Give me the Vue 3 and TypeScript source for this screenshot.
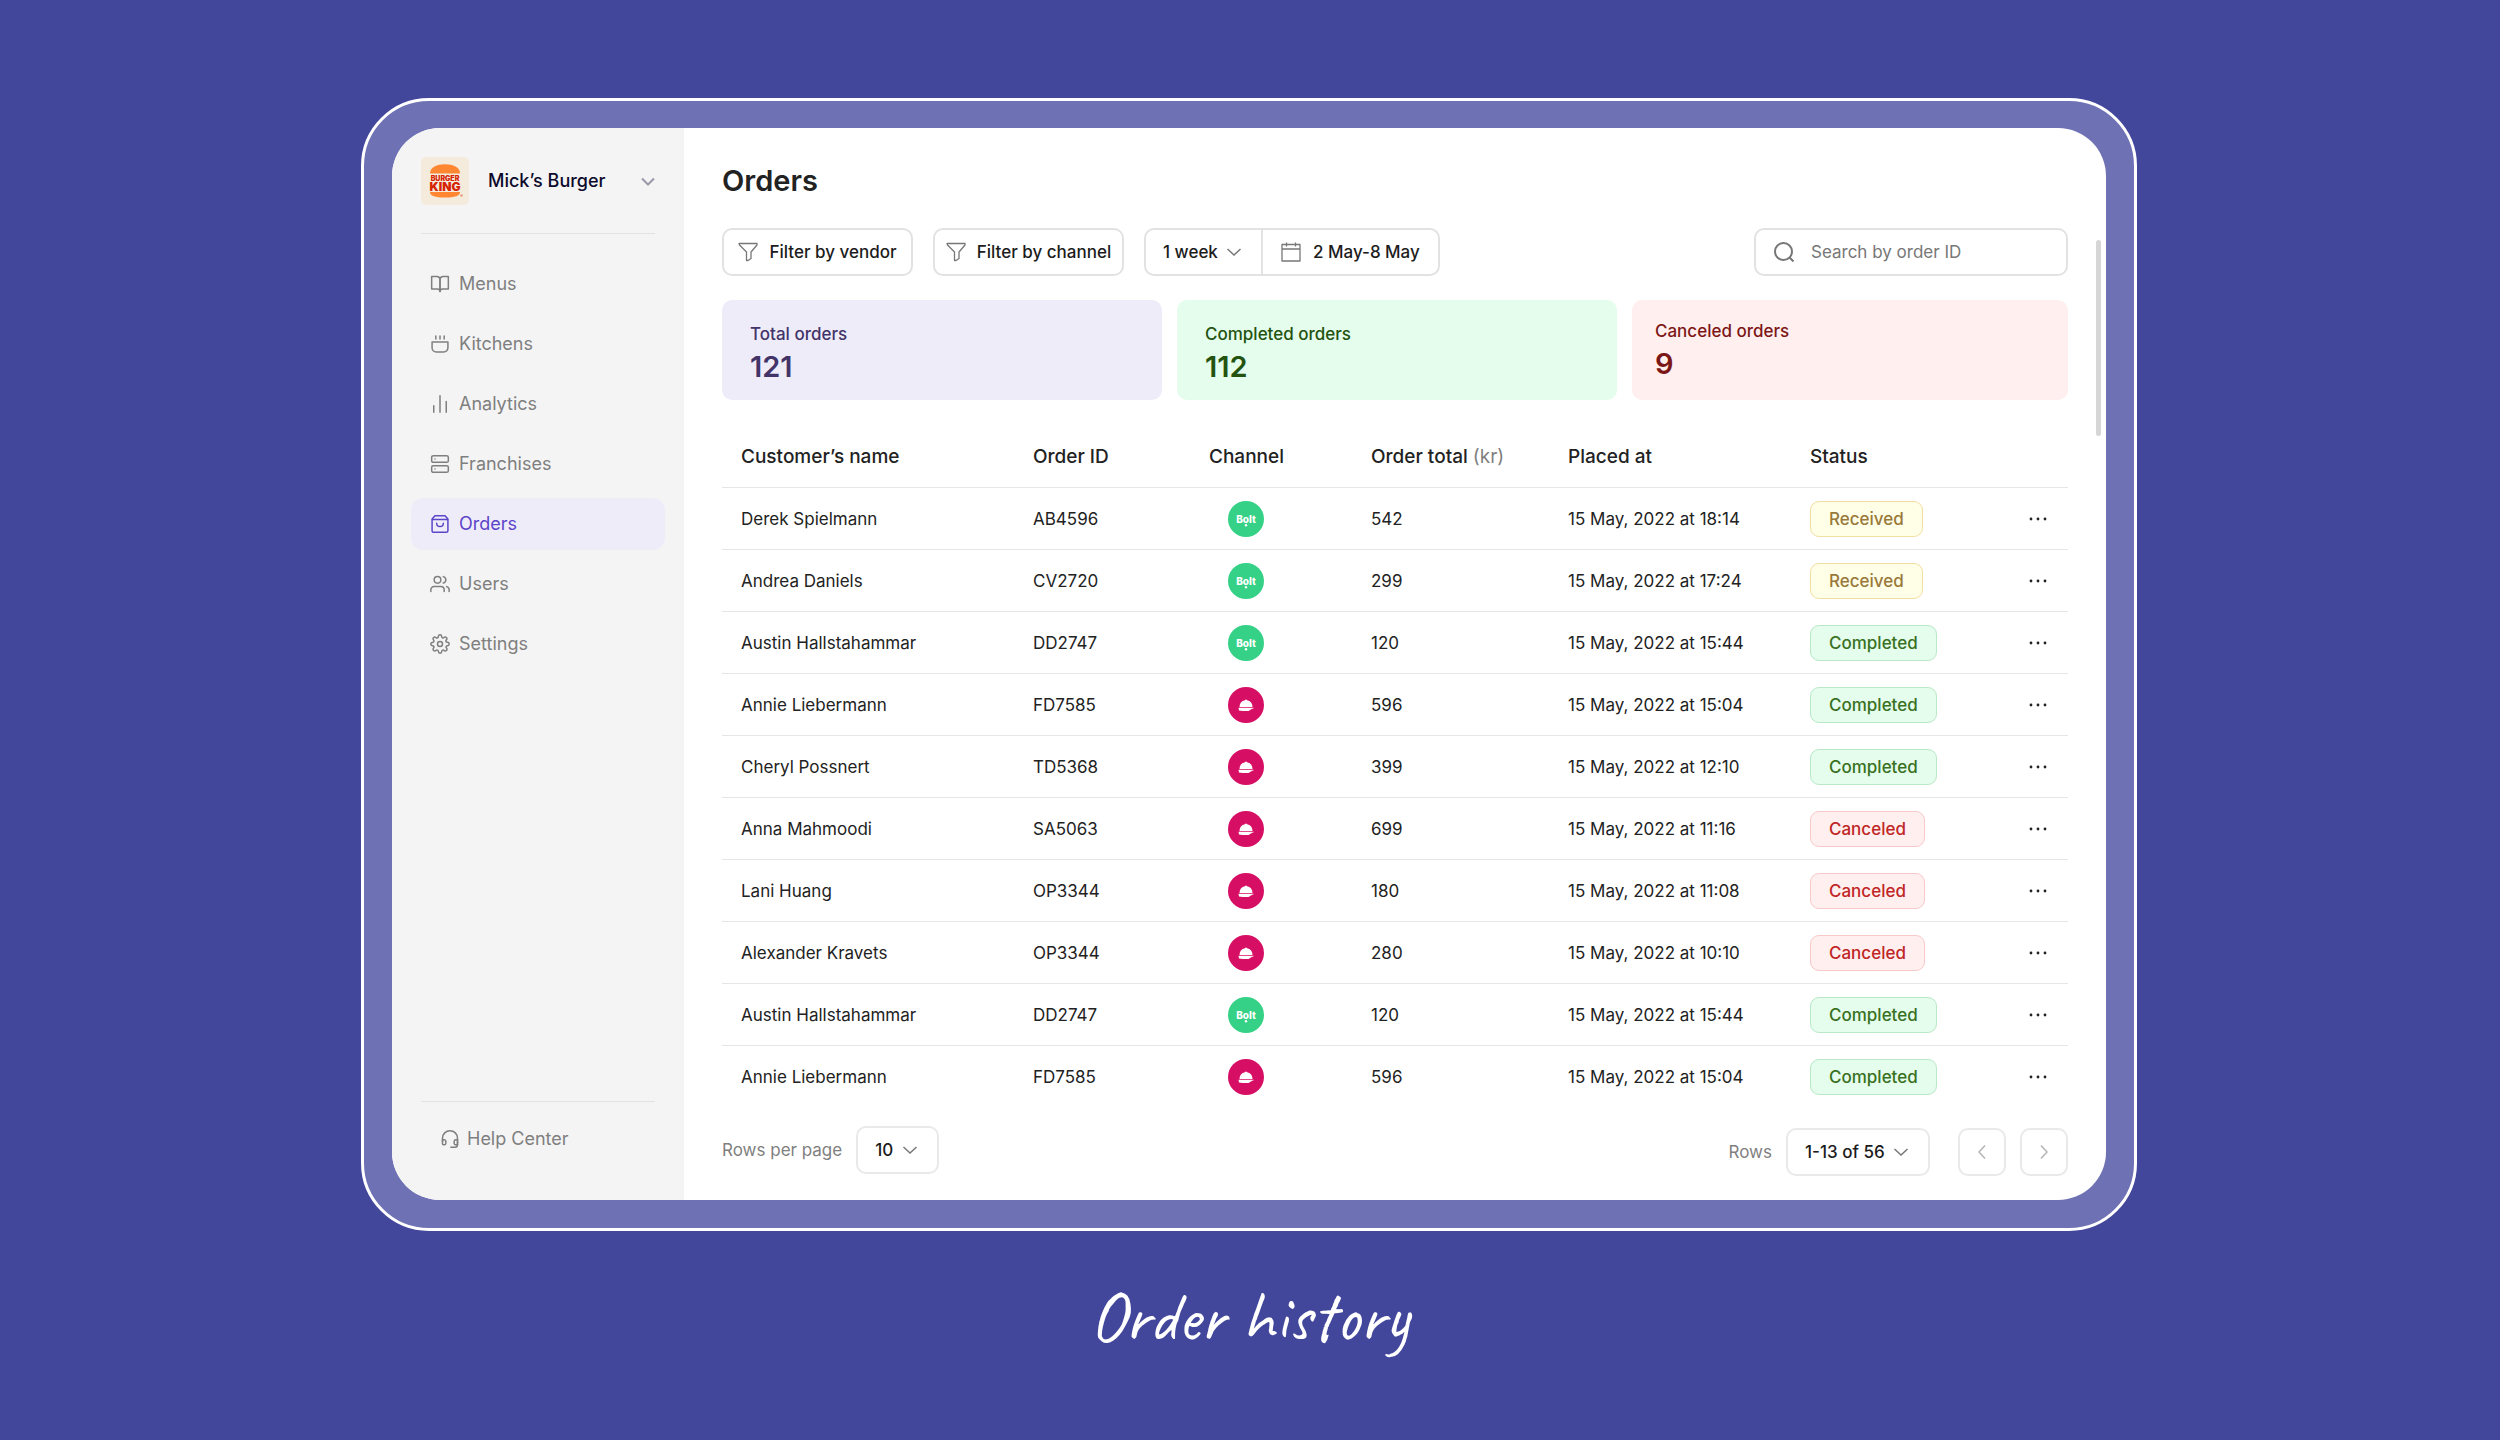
<script setup lang="ts">
type Channel = 'bolt' | 'foodora'
type Status = 'Received' | 'Completed' | 'Canceled'

interface Order {
  name: string
  id: string
  channel: Channel
  total: number
  placed: string
  status: Status
}

const nav = ['Menus', 'Kitchens', 'Analytics', 'Franchises', 'Orders', 'Users', 'Settings']
const active = 'Orders'

const stats = [
  { key: 'total', label: 'Total orders', value: 121 },
  { key: 'completed', label: 'Completed orders', value: 112 },
  { key: 'canceled', label: 'Canceled orders', value: 9 },
]

const orders: Order[] = [
  { name: 'Derek Spielmann', id: 'AB4596', channel: 'bolt', total: 542, placed: '15 May, 2022 at 18:14', status: 'Received' },
  { name: 'Andrea Daniels', id: 'CV2720', channel: 'bolt', total: 299, placed: '15 May, 2022 at 17:24', status: 'Received' },
  { name: 'Austin Hallstahammar', id: 'DD2747', channel: 'bolt', total: 120, placed: '15 May, 2022 at 15:44', status: 'Completed' },
  { name: 'Annie Liebermann', id: 'FD7585', channel: 'foodora', total: 596, placed: '15 May, 2022 at 15:04', status: 'Completed' },
  { name: 'Cheryl Possnert', id: 'TD5368', channel: 'foodora', total: 399, placed: '15 May, 2022 at 12:10', status: 'Completed' },
  { name: 'Anna Mahmoodi', id: 'SA5063', channel: 'foodora', total: 699, placed: '15 May, 2022 at 11:16', status: 'Canceled' },
  { name: 'Lani Huang', id: 'OP3344', channel: 'foodora', total: 180, placed: '15 May, 2022 at 11:08', status: 'Canceled' },
  { name: 'Alexander Kravets', id: 'OP3344', channel: 'foodora', total: 280, placed: '15 May, 2022 at 10:10', status: 'Canceled' },
  { name: 'Austin Hallstahammar', id: 'DD2747', channel: 'bolt', total: 120, placed: '15 May, 2022 at 15:44', status: 'Completed' },
  { name: 'Annie Liebermann', id: 'FD7585', channel: 'foodora', total: 596, placed: '15 May, 2022 at 15:04', status: 'Completed' },
]
</script>

<template>
  <div class="stage">
    <div class="frame">
      <div class="app">
        <aside class="sidebar">
          <button class="brand" type="button">
            <svg class="logo" viewBox="0 0 48 48" aria-hidden="true">
              <rect width="48" height="48" rx="5" fill="#f5ebdc" />
              <path d="M9 16.5C9 10 16 7.200 24 7.200S39 10 39 16.500Z" fill="#ff8732" />
              <path d="M9 35H39C39 39 34 40.500 24 40.500S9 39 9 35Z" fill="#ff8732" />
              <text x="24" y="24" class="logo-top">BURGER</text>
              <text x="24" y="34" class="logo-bottom">KING</text>
              <circle cx="40.500" cy="38.500" r="1.200" fill="#e8957c" />
            </svg>
            <span class="brand-name">Mick’s Burger</span>
            <svg class="brand-chevron" viewBox="0 0 14 9" aria-hidden="true"><path d="M1 1.500 7 7.500 13 1.500" /></svg>
          </button>

          <nav class="nav">
            <a v-for="item in nav" :key="item" href="#" class="nav-item" :class="{ active: item === active }">
              <svg class="icon" viewBox="0 0 24 24" aria-hidden="true">
                <template v-if="item === 'Menus'">
                  <path d="M2 3h6a4 4 0 0 1 4 4v14a3 3 0 0 0-3-3H2z" />
                  <path d="M22 3h-6a4 4 0 0 0-4 4v14a3 3 0 0 1 3-3h7z" />
                </template>
                <template v-else-if="item === 'Kitchens'">
                  <path d="M2.500 9.500h19v7a5 5 0 0 1-5 5h-9a5 5 0 0 1-5-5z" />
                  <path d="M7 2.500v3.500M12 2.500v3.500M17 2.500v3.500" />
                </template>
                <path v-else-if="item === 'Analytics'" d="M4.500 14v8M12 2v20M19.500 9v13" />
                <template v-else-if="item === 'Franchises'">
                  <rect x="2" y="2" width="20" height="8" rx="2" />
                  <rect x="2" y="14" width="20" height="8" rx="2" />
                  <path d="M6 6h.01M6 18h.01" />
                </template>
                <template v-else-if="item === 'Orders'">
                  <path d="M6 2h12l3.500 4v14a2 2 0 0 1-2 2h-15a2 2 0 0 1-2-2V6z" />
                  <path d="M3 6.500h18M16 11a4 4 0 0 1-8 0" />
                </template>
                <template v-else-if="item === 'Users'">
                  <path d="M17 21v-2a4 4 0 0 0-4-4H5a4 4 0 0 0-4 4v2" />
                  <circle cx="9" cy="7" r="4" />
                  <path d="M23 21v-2a4 4 0 0 0-3-3.870M16 3.130a4 4 0 0 1 0 7.750" />
                </template>
                <template v-else>
                  <circle cx="12" cy="12" r="3" />
                  <path d="M19.400 15a1.650 1.650 0 0 0 .33 1.820l.06.06a2 2 0 1 1-2.830 2.830l-.06-.06a1.650 1.650 0 0 0-2.800 1.180V21a2 2 0 0 1-4 0v-.09A1.650 1.650 0 0 0 9 19.400a1.650 1.650 0 0 0-1.820.33l-.06.06a2 2 0 1 1-2.830-2.830l.06-.06a1.650 1.650 0 0 0-1.180-2.800H3a2 2 0 0 1 0-4h.09A1.650 1.650 0 0 0 4.600 9a1.650 1.650 0 0 0-.33-1.820l-.06-.06a2 2 0 1 1 2.830-2.830l.06.06A1.650 1.650 0 0 0 9 4.680 1.650 1.650 0 0 0 10 3.170V3a2 2 0 0 1 4 0v.09a1.650 1.650 0 0 0 2.820 1.180l.06-.06a2 2 0 1 1 2.830 2.830l-.06.06A1.650 1.650 0 0 0 20.830 10H21a2 2 0 0 1 0 4h-.09a1.650 1.650 0 0 0-1.510 1z" />
                </template>
              </svg>
              <span>{{ item }}</span>
            </a>
          </nav>

          <div class="help">
            <a href="#" class="help-link">
              <svg class="icon" viewBox="0 0 24 24" aria-hidden="true">
                <path d="M3 15v-4a9 9 0 0 1 18 0v8a3 3 0 0 1-3 3h-5" />
                <path d="M3 13h2a2 2 0 0 1 2 2v2a2 2 0 0 1-2 2h-.500a1.500 1.500 0 0 1-1.500-1.500z" />
                <path d="M21 13h-2a2 2 0 0 0-2 2v2a2 2 0 0 0 2 2h2z" />
              </svg>
              <span>Help Center</span>
            </a>
          </div>
        </aside>

        <main class="main">
          <h1>Orders</h1>

          <div class="toolbar">
            <button v-for="kind in ['vendor', 'channel']" :key="kind" type="button" class="control filter">
              <svg class="tool-icon" viewBox="0 0 20 20" aria-hidden="true">
                <path d="M1 1.500h18v1.500l-6 7v6.500l-3 2H8.500V10l-7-7z" />
              </svg>
              Filter by {{ kind }}
            </button>
            <div class="control range">
              <div class="picker">
                <select aria-label="Period"><option>1 week</option></select>
                <svg class="chevron" viewBox="0 0 14 8" aria-hidden="true"><path d="M.5 1 7 7 13.500 1" /></svg>
              </div>
              <button type="button" class="dates">
                <svg class="tool-icon" viewBox="0 0 20 20" aria-hidden="true">
                  <path d="M1 2.500h18v16.500H1zM1 7h18M5.500 .5v4M14.500 .5v4" />
                </svg>
                2 May-8 May
              </button>
            </div>
            <label class="control search">
              <svg class="search-icon" viewBox="0 0 20 20" aria-hidden="true">
                <circle cx="9.500" cy="9.500" r="8.500" />
                <path d="m15.500 15.500 4 4" />
              </svg>
              <input type="search" placeholder="Search by order ID" aria-label="Search by order ID" />
            </label>
          </div>

          <section class="stats">
            <div v-for="s in stats" :key="s.key" class="stat" :class="s.key">
              <span class="stat-label">{{ s.label }}</span>
              <strong>{{ s.value }}</strong>
            </div>
          </section>

          <table>
            <colgroup>
              <col class="c-name" /><col class="c-id" /><col class="c-channel" /><col class="c-total" />
              <col class="c-placed" /><col class="c-status" /><col class="c-more" />
            </colgroup>
            <thead>
              <tr>
                <th>Customer’s name</th>
                <th>Order ID</th>
                <th>Channel</th>
                <th>Order total <span class="unit">(kr)</span></th>
                <th>Placed at</th>
                <th>Status</th>
                <th></th>
              </tr>
            </thead>
            <tbody>
              <tr v-for="(o, i) in orders" :key="i">
                <td>{{ o.name }}</td>
                <td>{{ o.id }}</td>
                <td>
                  <div class="channel">
                    <svg v-if="o.channel === 'bolt'" viewBox="0 0 36 36" role="img" aria-label="Bolt">
                      <circle cx="18" cy="18" r="18" fill="#34d186" />
                      <text x="18" y="22" class="bolt">Bolt</text>
                      <circle cx="18" cy="24.300" r="1.200" fill="#fff" />
                    </svg>
                    <svg v-else viewBox="0 0 36 36" role="img" aria-label="Foodora">
                      <circle cx="18" cy="18" r="18" fill="#d70f64" />
                      <path d="M11.500 20a6.800 7 0 0 1 5.500-6.800 1.100 1.100 0 0 1 2 0A6.800 7 0 0 1 24.500 20Z" fill="#fff" />
                      <path d="M10.500 20.800h15v.8l-4.500.6 3-.1-3.500 2h-6l-3.500-.6z" fill="#fff" />
                    </svg>
                  </div>
                </td>
                <td>{{ o.total }}</td>
                <td>{{ o.placed }}</td>
                <td><span class="badge" :class="o.status.toLowerCase()">{{ o.status }}</span></td>
                <td class="more-cell">
                  <button type="button" class="more" :aria-label="'Actions for ' + o.id">
                    <svg viewBox="0 0 20 4" aria-hidden="true">
                      <circle cx="3" cy="2" r="1.400" /><circle cx="10" cy="2" r="1.400" /><circle cx="17" cy="2" r="1.400" />
                    </svg>
                  </button>
                </td>
              </tr>
            </tbody>
          </table>

          <footer class="footer">
            <div class="per-page">
              <label for="per-page">Rows per page</label>
              <div class="control picker soft">
                <select id="per-page"><option>10</option></select>
                <svg class="chevron" viewBox="0 0 14 8" aria-hidden="true"><path d="M.5 1 7 7 13.500 1" /></svg>
              </div>
            </div>
            <div class="pager">
              <label for="rows">Rows</label>
              <div class="control picker soft">
                <select id="rows"><option>1-13 of 56</option></select>
                <svg class="chevron" viewBox="0 0 14 8" aria-hidden="true"><path d="M.5 1 7 7 13.500 1" /></svg>
              </div>
              <div class="steps">
                <button type="button" class="control soft step" aria-label="Previous page">
                  <svg viewBox="0 0 8 14" aria-hidden="true"><path d="M7 .5 1 7l6 6.500" /></svg>
                </button>
                <button type="button" class="control soft step" aria-label="Next page">
                  <svg viewBox="0 0 8 14" aria-hidden="true"><path d="m1 .5 6 6.500-6 6.500" /></svg>
                </button>
              </div>
            </div>
          </footer>

          <div class="scrollbar"></div>
        </main>
      </div>
    </div>
    <p class="caption">Order history</p>
  </div>
</template>

<style>
body {
  margin: 0;
  background: #42479b;
}
</style>

<style scoped>
* {
  box-sizing: border-box;
}

.stage {
  min-height: 100vh;
  padding: 98px 363px 0 361px;
  background: #42479b;
  font-family: Inter, "Liberation Sans", sans-serif;
  font-size: 17px;
  line-height: 24px;
  color: #222;
}

button,
select,
input {
  font: inherit;
  color: inherit;
  margin: 0;
  padding: 0;
  border: 0;
  background: none;
  appearance: none;
  outline: none;
}

button,
select {
  cursor: pointer;
}

a {
  color: inherit;
  text-decoration: none;
}

svg {
  display: block;
  flex: none;
  fill: none;
}

.frame {
  padding: 27px 28px 28px;
  border: 3px solid #fff;
  border-radius: 68px;
  background: #6e71b3;
}

.app {
  display: flex;
  overflow: hidden;
  border-radius: 48px;
  background: #fff;
}

.sidebar {
  display: flex;
  flex-direction: column;
  flex: none;
  width: 292px;
  padding-top: 29px;
  background: #f4f4f4;
  font-size: 18px;
  color: #7f7f7f;
}

.brand {
  display: flex;
  align-items: center;
  margin: 0 29px;
  padding-bottom: 28px;
  border-bottom: 1px solid #e2e2e2;
  font-weight: 500;
  color: #0d0a2c;
}

.logo {
  width: 48px;
  height: 48px;
  margin-right: 19px;
}

.logo-top,
.logo-bottom {
  font-family: Inter, sans-serif;
  font-weight: 900;
  text-anchor: middle;
  fill: #d62300;
}

.logo-top {
  font-size: 7px;
}

.logo-bottom {
  font-size: 12px;
}

.brand-chevron {
  width: 14px;
  height: 9px;
  margin-left: auto;
  stroke: #9b99a9;
  stroke-width: 2;
}

.nav {
  display: flex;
  flex-direction: column;
  gap: 8px;
  margin: 24px 19px 0;
}

.nav-item {
  display: flex;
  align-items: center;
  gap: 9px;
  height: 52px;
  padding-left: 19px;
  border-radius: 12px;
}

.nav-item.active {
  background: #efecfa;
  color: #5b45c9;
}

.icon {
  width: 20px;
  height: 20px;
  stroke: currentColor;
  stroke-width: 1.8;
  stroke-linecap: round;
  stroke-linejoin: round;
}

.help {
  margin: auto 29px 0;
  padding: 19px 19px 43px;
  border-top: 1px solid #e2e2e2;
}

.help-link {
  display: flex;
  align-items: center;
  gap: 7px;
  height: 36px;
}

.main {
  position: relative;
  flex: 1;
  min-width: 0;
  padding: 36px 38px 24px;
}

h1 {
  margin: 0 0 30px;
  font-size: 29px;
  line-height: 34px;
  font-weight: 600;
}

.toolbar {
  display: flex;
  gap: 20px;
  margin-bottom: 24px;
}

.control {
  height: 48px;
  border: 2px solid #e2e2e2;
  border-radius: 10px;
  background: #fff;
}

.filter,
.range,
.picker {
  font-weight: 500;
  color: #1c1c1c;
}

.filter {
  display: flex;
  align-items: center;
  justify-content: center;
  gap: 11px;
  width: 191px;
  white-space: nowrap;
}

.tool-icon,
.search-icon {
  width: 20px;
  height: 20px;
  stroke: #777;
  stroke-width: 1.3;
  stroke-linejoin: round;
}

.search-icon {
  stroke-width: 2;
}

.range {
  display: flex;
}

.picker {
  position: relative;
  display: flex;
}

.picker select {
  padding: 0 43px 0 17px;
  border-radius: 8px;
}

.picker .chevron {
  position: absolute;
  top: 50%;
  right: 20px;
  margin-top: -4px;
  pointer-events: none;
}

.chevron {
  width: 14px;
  height: 8px;
  stroke: #777;
  stroke-width: 1.5;
}

.dates {
  display: flex;
  align-items: center;
  gap: 12px;
  padding: 0 18px;
  border-left: 2px solid #e2e2e2;
  font-weight: 500;
}

.search {
  display: flex;
  align-items: center;
  gap: 17px;
  width: 314px;
  margin-left: auto;
  padding: 0 18px;
}

.search input {
  flex: 1;
  min-width: 0;
}

.search input::placeholder {
  color: #777;
  opacity: 1;
}

.stats {
  display: grid;
  grid-template-columns: 440fr 440fr 436fr;
  gap: 15px;
  margin-bottom: 26px;
}

.stat {
  display: flex;
  flex-direction: column;
  gap: 3px;
  height: 100px;
  padding: 22px 28px;
  border-radius: 10px;
}

.stat strong {
  font-size: 29px;
  line-height: 36px;
  font-weight: 600;
}

.stat-label {
  font-weight: 500;
}

.stat.total {
  background: #efecfa;
  color: #423468;
}

.stat.completed {
  background: #e4fdec;
  color: #23530f;
}

.stat.canceled {
  padding: 19px 23px;
  background: #ffefef;
  color: #7c1717;
}

table {
  width: 100%;
  border-spacing: 0;
  table-layout: fixed;
}

.c-name { width: 292px; }
.c-id { width: 176px; }
.c-channel { width: 162px; }
.c-total { width: 197px; }
.c-placed { width: 242px; }
.c-status { width: 217px; }
.c-more { width: 60px; }

th,
td {
  height: 62px;
  padding: 0 0 0 19px;
  border-bottom: 1px solid #e6e6e6;
  text-align: left;
  white-space: nowrap;
}

tbody tr:last-child td {
  border-bottom-color: transparent;
}

th {
  font-size: 19px;
  font-weight: 500;
}

.unit {
  font-weight: 400;
  color: #7f7f7f;
}

.channel {
  display: flex;
  justify-content: center;
  width: 74px;
}

.channel svg {
  width: 36px;
  height: 36px;
}

.bolt {
  font-family: Inter, sans-serif;
  font-size: 10px;
  font-weight: 800;
  text-anchor: middle;
  fill: #fff;
}

.badge {
  display: inline-block;
  padding: 5px 18px;
  border: 1px solid;
  border-radius: 9px;
  font-weight: 500;
  vertical-align: middle;
}

.badge.received {
  background: #fffee6;
  border-color: #f3dfa2;
  color: #98793a;
}

.badge.completed {
  background: #e4fdec;
  border-color: #b9e8c8;
  color: #39711f;
}

.badge.canceled {
  background: #ffefef;
  border-color: #f8c9c9;
  color: #c02626;
}

.more-cell {
  padding: 0;
}

.more {
  display: block;
  margin: 0 auto;
  padding: 12px 0;
}

.more svg {
  width: 20px;
  height: 4px;
  fill: #222;
}

.footer {
  display: flex;
  justify-content: space-between;
  margin-top: 18px;
  color: #7f7f7f;
}

.per-page,
.pager {
  display: flex;
  align-items: center;
  gap: 14px;
}

.per-page {
  padding-bottom: 2px;
}

.pager {
  padding-top: 2px;
}

.control.soft {
  border-color: #e9e9e9;
}

.steps {
  display: flex;
  gap: 14px;
  margin-left: 14px;
}

.step {
  display: flex;
  align-items: center;
  justify-content: center;
  width: 48px;
}

.step svg {
  width: 8px;
  height: 14px;
  stroke: #b5b5b5;
  stroke-width: 1.5;
}

.scrollbar {
  position: absolute;
  top: 112px;
  right: 5px;
  width: 5px;
  height: 196px;
  border-radius: 3px;
  background: #d6d6d6;
}

.caption {
  margin: 46px 0 0;
  font-family: Caveat, cursive;
  font-size: 70px;
  line-height: 80px;
  font-weight: 400;
  text-align: center;
  color: #fff;
}
</style>
